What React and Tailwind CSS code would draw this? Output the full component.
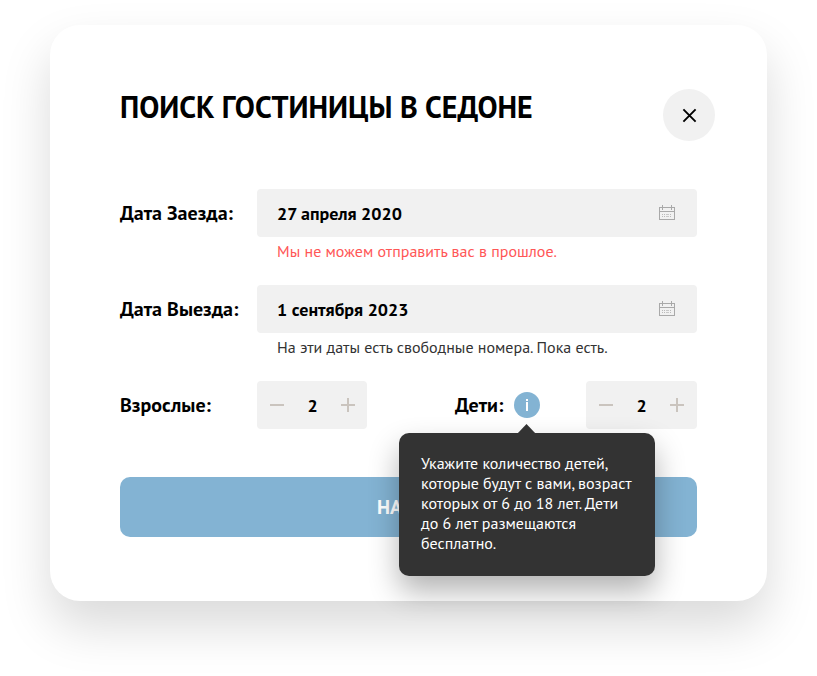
import React from "react";

function CalendarIcon() {
  return (
    <svg className="-mt-0.5" width="16" height="15" viewBox="0 0 16 15" fill="none" shapeRendering="crispEdges" aria-hidden="true">
      <path d="M0.5 2.5h15v12h-15zM1 6.5h14M3.5 0v5M12.5 0v5" stroke="#a9a9a9" />
      <path d="M3 9.5h10M3 11.5h10" stroke="#b9b9b9" strokeDasharray="1 1" />
      <path d="M7 9.5h3M7 11.5h3" stroke="#c8c8c8" />
    </svg>
  );
}

function DateField({ label, value, hint, hintClass }) {
  return (
    <div className="grid h-24 grid-cols-[137px_440px] grid-rows-[48px_48px]">
      <label className="flex items-center text-xl font-bold whitespace-nowrap">{label}</label>
      <div className="flex items-center justify-between rounded bg-[#f1f1f1] pr-[22px] pl-5 text-lg font-bold whitespace-nowrap">
        <span className="pt-px">{value}</span>
        <CalendarIcon />
      </div>
      <p className={hintClass}>{hint}</p>
    </div>
  );
}

function Counter({ className }) {
  return (
    <div className={className}>
      <button type="button" aria-label="Меньше" className="flex h-[14px] w-[14px] items-center">
        <span className="h-0.5 w-[14px] bg-[#cac4be]" />
      </button>
      <span className="pt-px text-lg font-bold">2</span>
      <button type="button" aria-label="Больше">
        <svg width="14" height="14" viewBox="0 0 14 14" aria-hidden="true">
          <path d="M6 0h2v6h6v2H8v6H6V8H0V6h6z" fill="#cac4be" />
        </svg>
      </button>
    </div>
  );
}

export default function App() {
  return (
    <div className="flex h-[676px] w-[817px] items-start bg-white px-[50px] pt-[25px] font-['PT_Sans','Noto_Sans',sans-serif] text-black">
      <main className="h-[576px] w-[717px] rounded-[30px] bg-white px-[70px] pt-16 shadow-[0_25px_50px_rgba(0,0,0,0.15)]">
        <header className="-mr-[18px] mb-12 flex h-[52px] justify-between">
          <h1 className="h-9 text-3xl leading-9 font-bold whitespace-nowrap">ПОИСК ГОСТИНИЦЫ В СЕДОНЕ</h1>
          <button type="button" aria-label="Закрыть" className="flex h-[52px] w-[52px] shrink-0 items-center justify-center rounded-full bg-[#f1f1f1]">
            <svg width="16" height="16" viewBox="0 0 16 16" aria-hidden="true">
              <path d="M2.4 2.4l12.2 12.2M14.6 2.4L2.4 14.6" stroke="#000" strokeWidth="1.9" />
            </svg>
          </button>
        </header>
        <DateField
          label="Дата Заезда:"
          value="27 апреля 2020"
          hint="Мы не можем отправить вас в прошлое."
          hintClass="col-start-2 pt-0.5 pl-5 text-base leading-6 whitespace-nowrap text-[#ff5757]"
        />
        <DateField
          label="Дата Выезда:"
          value="1 сентября 2023"
          hint="На эти даты есть свободные номера. Пока есть."
          hintClass="col-start-2 pt-0.5 pl-5 text-base leading-6 whitespace-nowrap text-[#333333]"
        />
        <div className="mb-12 flex h-12 items-center text-xl font-bold">
          <span className="w-[137px]">Взрослые:</span>
          <Counter className="flex h-12 w-[110px] items-center justify-between rounded bg-[#f1f1f1] pr-3 pl-[13px]" />
          <span className="ml-[88px] w-[59px]">Дети:</span>
          <div className="relative h-[26px] w-[26px]">
            <button type="button" aria-label="Подсказка" className="flex h-[26px] w-[26px] items-center justify-center rounded-full bg-[#83b3d3]">
              <svg width="2" height="12" viewBox="0 0 2 12" aria-hidden="true">
                <path d="M0 0h2v2H0zM0 3h2v9H0z" fill="#fff" />
              </svg>
            </button>
            <div role="tooltip" className="absolute top-[41px] -left-[115px] z-10 h-[143px] w-[256px] rounded-[10px] bg-[#333333] px-[22px] pt-5 text-base leading-5 font-normal text-white shadow-[0_15px_30px_rgba(0,0,0,0.3)]">
              <svg className="absolute -top-[9px] left-[118px]" width="20" height="10" viewBox="0 0 20 10" aria-hidden="true">
                <path d="M0 10L9.5 0l9.5 10z" fill="#333333" />
              </svg>
              <p>Укажите количество детей, которые будут с вами, возраст которых от 6 до 18 лет. Дети до 6 лет размещаются бесплатно.</p>
            </div>
          </div>
          <Counter className="ml-[46px] flex h-12 w-[111px] items-center justify-between rounded bg-[#f1f1f1] px-[13px]" />
        </div>
        <button type="button" className="flex h-[60px] w-[577px] items-center justify-center rounded-[10px] bg-[#83b3d3] text-xl font-bold text-white">
          НАЙТИ
        </button>
      </main>
    </div>
  );
}
